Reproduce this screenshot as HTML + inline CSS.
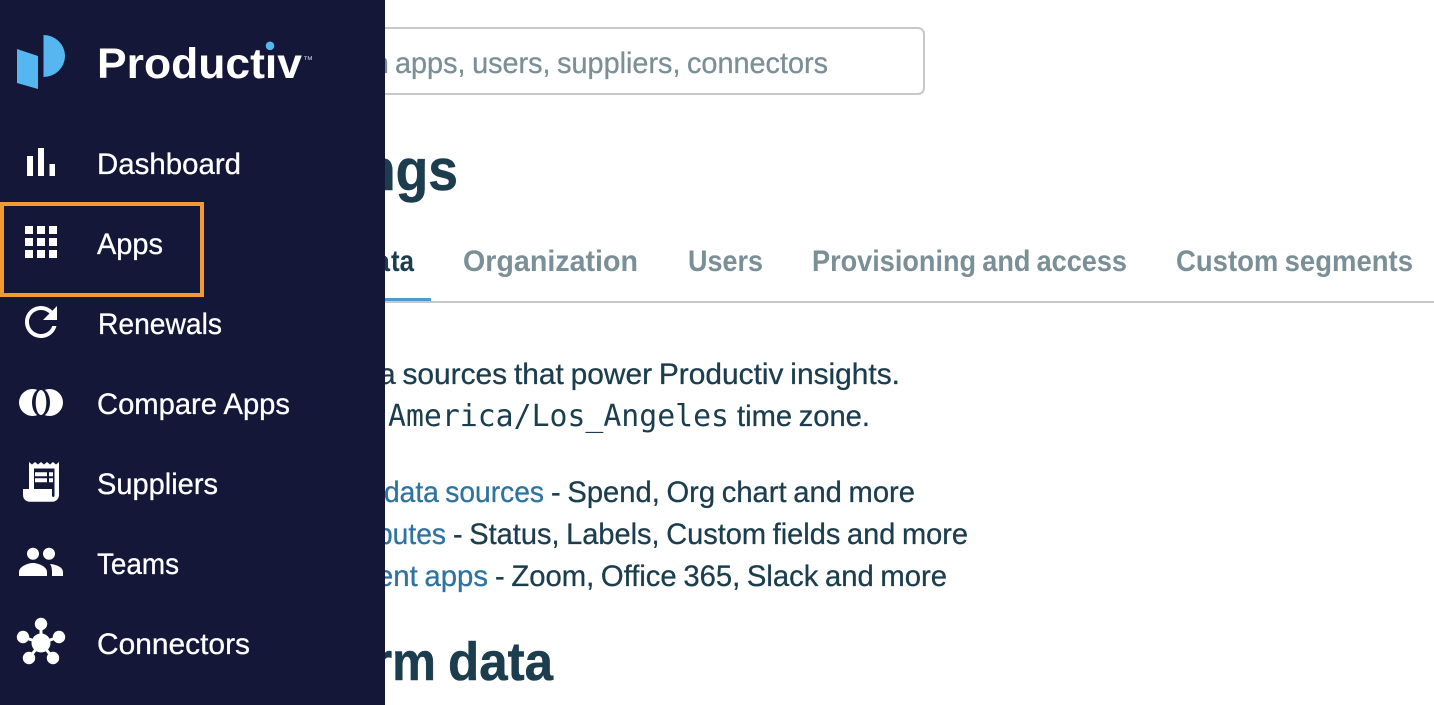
<!DOCTYPE html>
<html lang="en">
<head>
<meta charset="utf-8">
<title>Productiv Settings</title>
<style>
html,body{margin:0;padding:0;background:#fff;width:1434px;height:705px;overflow:hidden}
svg{display:block}
text{font-family:"Liberation Sans",sans-serif}
.nav{fill:#fff;font-size:30px;stroke:#fff;stroke-width:.3px}
.b{fill:#1b3d4d;font-size:30px;stroke:#1b3d4d;stroke-width:.3px;word-spacing:-1.500px}
.l{fill:#2f739f;font-size:30px;stroke:#2f739f;stroke-width:.3px;word-spacing:-1.500px}
.t{fill:#7a8f96;font-size:30px;font-weight:700;word-spacing:-1.500px}
.p{fill:#7a8f96;font-size:30px;stroke:#7a8f96;stroke-width:.3px;word-spacing:-1.500px}
.h{fill:#1b3d4d;font-weight:700;stroke:#1b3d4d;stroke-width:.5px}
</style>
</head>
<body>
<svg width="1434" height="705" viewBox="0 0 1434 705" xmlns="http://www.w3.org/2000/svg">
<rect width="1434" height="705" fill="#fff"/>

<!-- search -->
<rect x="340" y="28" width="584" height="66" rx="6" fill="#fff" stroke="#c8c8c8" stroke-width="2"/>
<text class="p" x="389" y="73" text-anchor="end">Search in</text>
<text class="p" x="395" y="73" textLength="433" lengthAdjust="spacingAndGlyphs">apps, users, suppliers, connectors</text>

<!-- heading -->
<text class="h" x="363" y="190" font-size="58" text-anchor="end">Setti</text>
<text class="h" x="363" y="190" font-size="58" textLength="95" lengthAdjust="spacingAndGlyphs">ngs</text>

<!-- tabs -->
<rect x="385" y="301" width="1049" height="2" fill="#c8c8c8"/>
<rect x="385" y="298" width="46" height="3" fill="#4a9bd4"/>
<text class="h" x="390" y="271" font-size="30" text-anchor="end" style="stroke-width:0">Platform da</text>
<text class="h" x="391" y="271" font-size="30" textLength="23" lengthAdjust="spacingAndGlyphs" style="stroke-width:0">ta</text>
<text class="t" x="463" y="271" textLength="175" lengthAdjust="spacingAndGlyphs">Organization</text>
<text class="t" x="688" y="271" textLength="75" lengthAdjust="spacingAndGlyphs">Users</text>
<text class="t" x="812" y="271" textLength="315" lengthAdjust="spacingAndGlyphs">Provisioning and access</text>
<text class="t" x="1176" y="271" textLength="237" lengthAdjust="spacingAndGlyphs">Custom segments</text>

<!-- body text -->
<text class="b" x="379" y="384" textLength="521" lengthAdjust="spacingAndGlyphs">a sources that power Productiv insights.</text>
<text x="388" y="426" fill="#1b3d4d" font-size="29.8" style="font-family:'DejaVu Sans Mono','Liberation Mono',monospace" textLength="341" lengthAdjust="spacingAndGlyphs">America/Los_Angeles</text>
<text class="b" x="737" y="426" textLength="133" lengthAdjust="spacingAndGlyphs">time zone.</text>

<text class="l" x="384" y="502" textLength="160" lengthAdjust="spacingAndGlyphs">data sources</text>
<text class="b" x="551" y="502" textLength="364" lengthAdjust="spacingAndGlyphs">- Spend, Org chart and more</text>
<text class="l" x="377" y="544" textLength="69" lengthAdjust="spacingAndGlyphs">butes</text>
<text class="b" x="453" y="544" textLength="515" lengthAdjust="spacingAndGlyphs">- Status, Labels, Custom fields and more</text>
<text class="l" x="377" y="586" textLength="111" lengthAdjust="spacingAndGlyphs">ent apps</text>
<text class="b" x="495" y="586" textLength="452" lengthAdjust="spacingAndGlyphs">- Zoom, Office 365, Slack and more</text>

<text class="h" x="373" y="680" font-size="54" text-anchor="end">Platfo</text>
<text class="h" x="373" y="680" font-size="54" textLength="63" lengthAdjust="spacingAndGlyphs">rm</text>
<text class="h" x="448" y="680" font-size="54" textLength="105" lengthAdjust="spacingAndGlyphs">data</text>

<!-- sidebar -->
<rect width="385" height="705" fill="#141738"/>

<!-- logo -->
<path d="M17 49L38 56V89L17 83Z" fill="#55b6f0"/>
<path d="M43.5 35A21.5 21 0 0 1 43.5 77Z" fill="#55b6f0"/>
<text x="97" y="78" fill="#fff" font-size="43" font-weight="700" textLength="205" lengthAdjust="spacingAndGlyphs">Productiv</text>
<rect x="264.500" y="42" width="10" height="12" fill="#141738"/>
<circle cx="270" cy="45.800" r="4.300" fill="#55b6f0"/>
<text x="303" y="63" fill="#c9cbd6" font-size="10" textLength="10" lengthAdjust="spacingAndGlyphs">™</text>

<!-- highlight -->
<rect x="2" y="204" width="200" height="91" fill="none" stroke="#f39a33" stroke-width="4"/>

<!-- dashboard icon -->
<g fill="#fff">
<rect x="27" y="156" width="6" height="20"/>
<rect x="38" y="148" width="6" height="28"/>
<rect x="49.500" y="164" width="5.500" height="12"/>
</g>
<!-- apps icon -->
<g fill="#fff">
<rect x="25" y="226" width="8" height="8"/><rect x="37" y="226" width="8" height="8"/><rect x="49" y="226" width="8" height="8"/>
<rect x="25" y="238" width="8" height="8"/><rect x="37" y="238" width="8" height="8"/><rect x="49" y="238" width="8" height="8"/>
<rect x="25" y="250" width="8" height="8"/><rect x="37" y="250" width="8" height="8"/><rect x="49" y="250" width="8" height="8"/>
</g>
<!-- renewals icon -->
<path transform="translate(17 298) scale(2)" fill="#fff" d="M17.65 6.35C16.2 4.9 14.21 4 12 4c-4.42 0-7.99 3.58-7.99 8s3.57 8 7.99 8c3.73 0 6.84-2.55 7.73-6h-2.08c-.82 2.33-3.04 4-5.65 4-3.31 0-6-2.69-6-6s2.69-6 6-6c1.66 0 3.14.69 4.22 1.78L13 11h7V4l-2.35 2.35z"/>
<!-- compare icon -->
<circle cx="32.500" cy="402.500" r="13.500" fill="#fff"/>
<circle cx="49.500" cy="402.500" r="13.500" fill="#fff"/>
<ellipse cx="41" cy="402.500" rx="9" ry="14" fill="#141738"/>
<ellipse cx="41" cy="402.500" rx="5.300" ry="12.500" fill="#fff"/>
<!-- suppliers icon -->
<path fill="#fff" fill-rule="evenodd" d="M29 462L32 464.500L35 462L38 464.500L41 462L44 464.500L47 462L50 464.500L53 462L56 464.500L59 462V495C59 499 56 501.700 52 501.700H30C26 501.700 23 499 23 495V489H29ZM34 468.500V489H52V495.500C52 497.500 54.500 497.500 54.500 495.500V468.500ZM35 472.300V476.300H47V472.300ZM49 472.300V476.300H53V472.300ZM35 478.300V482.300H47V478.300ZM49 478.300V482.300H53V478.300Z"/>
<!-- teams icon -->
<g fill="#fff">
<circle cx="33" cy="553.700" r="6"/>
<circle cx="49" cy="553.700" r="6"/>
<path d="M19 576V572C19 566.500 28 563 33 563S47 566.500 47 572V576Z"/>
<path d="M50 564C56 564.500 63 567 63 572V576H52V572C52 569 51.500 566 50 564Z"/>
</g>
<!-- connectors icon -->
<g stroke="#fff" stroke-width="3">
<line x1="41" y1="643" x2="41" y2="624"/>
<line x1="41" y1="643" x2="23" y2="637"/>
<line x1="41" y1="643" x2="59" y2="637"/>
<line x1="41" y1="643" x2="29" y2="658"/>
<line x1="41" y1="643" x2="53" y2="658"/>
</g>
<g fill="#fff">
<circle cx="41" cy="643" r="9.500"/>
<circle cx="41" cy="624" r="6.200"/>
<circle cx="23" cy="637" r="6.200"/>
<circle cx="59" cy="637" r="6.200"/>
<circle cx="29" cy="658" r="6.200"/>
<circle cx="53" cy="658" r="6.200"/>
</g>

<!-- nav labels -->
<text class="nav" x="97" y="174" textLength="144" lengthAdjust="spacingAndGlyphs">Dashboard</text>
<text class="nav" x="97" y="254" textLength="66" lengthAdjust="spacingAndGlyphs">Apps</text>
<text class="nav" x="98" y="334" textLength="124" lengthAdjust="spacingAndGlyphs">Renewals</text>
<text class="nav" x="97" y="414" textLength="193" lengthAdjust="spacingAndGlyphs">Compare Apps</text>
<text class="nav" x="97" y="494" textLength="121" lengthAdjust="spacingAndGlyphs">Suppliers</text>
<text class="nav" x="97" y="574" textLength="82" lengthAdjust="spacingAndGlyphs">Teams</text>
<text class="nav" x="97" y="654" textLength="153" lengthAdjust="spacingAndGlyphs">Connectors</text>
</svg>
</body>
</html>
